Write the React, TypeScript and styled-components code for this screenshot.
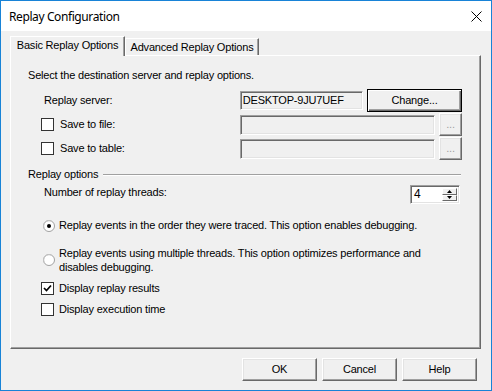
import styled, { createGlobalStyle } from 'styled-components'

const GlobalStyle = createGlobalStyle`
  html, body { margin: 0; padding: 0; background: #ffffff; }
  body { font-family: 'Liberation Sans', Arial, sans-serif; }
  * { box-sizing: border-box; }
`

const Window = styled.div`
  width: 492px;
  height: 391px;
  border: 1px solid #1883d7;
  background: #f0f0f0;
  display: flex;
  flex-direction: column;
  font-size: 11px;
  letter-spacing: -0.18px;
  color: #000;
`

const TitleBar = styled.div`
  height: 30px;
  flex: none;
  background: #ffffff;
  display: flex;
  align-items: center;
  justify-content: space-between;
  padding: 0 9px 0 8px;
  font-family: 'Noto Sans', 'Open Sans', sans-serif;
  font-size: 12px;
  letter-spacing: -0.4px;
`

const Body = styled.div`
  padding: 5px 0 0 9px;
  display: flex;
  flex-direction: column;
`

const TabStrip = styled.div`
  height: 19px;
  display: flex;
  align-items: flex-end;
`

const Tab = styled.div<{ $active?: boolean; $w: number }>`
  width: ${p => p.$w}px;
  height: ${p => (p.$active ? 20 : 17)}px;
  margin-bottom: ${p => (p.$active ? -1 : 0)}px;
  position: relative;
  z-index: ${p => (p.$active ? 1 : 0)};
  background: #f0f0f0;
  border-top: 1px solid #ffffff;
  border-left: 1px solid #ffffff;
  border-right: 1px solid #696969;
  box-shadow: inset -1px 0 #a0a0a0;
  text-align: center;
  line-height: 13px;
  padding-top: 2px;
  white-space: nowrap;
`

const Panel = styled.div`
  width: 471px;
  height: 294px;
  border-top: 1px solid #ffffff;
  border-left: 1px solid #ffffff;
  border-right: 1px solid #696969;
  border-bottom: 1px solid #696969;
  box-shadow: inset -1px -1px #a0a0a0;
  padding: 13px 18px 0 17px;
  display: flex;
  flex-direction: column;
`

const Text = styled.div`
  line-height: 13px;
  white-space: nowrap;
`

const Form = styled.div`
  margin: 7px 0 0 13px;
  display: flex;
  flex-direction: column;
  gap: 1px;
`

const FormRow = styled.div`
  height: 23px;
  display: flex;
  align-items: center;
`

const LeftCell = styled.div`
  width: 200px;
  display: flex;
  align-items: center;
  gap: 5px;
`

const Label = styled.span<{ $indent?: number }>`
  line-height: 13px;
  margin-left: ${p => p.$indent ?? 0}px;
  white-space: nowrap;
`

const Field = styled.div<{ $w: number; $h: number }>`
  width: ${p => p.$w}px;
  height: ${p => p.$h}px;
  border-top: 1px solid #a0a0a0;
  border-left: 1px solid #a0a0a0;
  border-right: 1px solid #ffffff;
  border-bottom: 1px solid #ffffff;
  box-shadow: inset 1px 1px #696969, inset -1px -1px #e3e3e3;
  background: #f0f0f0;
  padding: 2px 0 0 2px;
  line-height: 13px;
`

const Button = styled.div<{ $w: number; $default?: boolean; $disabled?: boolean }>`
  width: ${p => p.$w}px;
  height: 23px;
  flex: none;
  margin-left: 4px;
  display: flex;
  align-items: center;
  justify-content: center;
  background: #f0f0f0;
  color: ${p => (p.$disabled ? '#a0a0a0' : '#000')};
  border: 1px solid;
  border-color: ${p => (p.$default ? '#000' : '#ffffff #696969 #696969 #ffffff')};
  box-shadow: ${p =>
    p.$default
      ? 'inset 1px 1px #ffffff, inset -1px -1px #696969, inset -2px -2px #a0a0a0'
      : 'inset -1px -1px #a0a0a0, inset 1px 1px #e3e3e3'};
  line-height: 13px;
`

const GroupHeader = styled.div`
  margin: 8px 1px 0 0;
  display: flex;
  align-items: center;
  gap: 5px;
`

const Rule = styled.div`
  flex: 1;
  height: 2px;
  border-top: 1px solid #a0a0a0;
  border-bottom: 1px solid #ffffff;
`

const ThreadsRow = styled.div`
  margin: 3px 2px 0 16px;
  height: 20px;
  display: flex;
  justify-content: space-between;
  align-items: flex-start;
`

const ThreadsLabel = styled(Text)`
  margin-top: 2px;
`

const Spinner = styled.div`
  width: 50px;
  height: 19px;
  margin-top: 1px;
  display: flex;
  background: #ffffff;
  border-top: 1px solid #a0a0a0;
  border-left: 1px solid #a0a0a0;
  border-right: 1px solid #ffffff;
  border-bottom: 1px solid #ffffff;
  box-shadow: inset 1px 1px #696969, inset -1px -1px #e3e3e3;
  padding: 2px 2px 2px 3px;
`

const SpinValue = styled.div`
  flex: 1;
  line-height: 13px;
  font-size: 12px;
`

const SpinButtons = styled.div`
  width: 15px;
  display: flex;
  flex-direction: column;
`

const SpinButton = styled.div`
  flex: 1;
  display: flex;
  align-items: center;
  justify-content: center;
  background: #f0f0f0;
  border-top: 1px solid #ffffff;
  border-left: 1px solid #ffffff;
  border-right: 1px solid #696969;
  border-bottom: 1px solid #696969;
`

const OptionRow = styled.div<{ $top: number; $indent: number }>`
  margin: ${p => p.$top}px 0 0 ${p => p.$indent}px;
  display: flex;
  align-items: center;
  gap: 4px;
`

const OptionText = styled.div<{ $lh?: number }>`
  line-height: ${p => p.$lh ?? 13}px;
`

const Box = styled.div`
  width: 13px;
  height: 13px;
  flex: none;
  background: #ffffff;
  border: 1px solid #333333;
  display: flex;
  align-items: center;
  justify-content: center;
  margin-right: 1px;
`

const Footer = styled.div`
  display: flex;
  justify-content: flex-end;
  gap: 5px;
  padding: 9px 14px 0 0;
`

const FooterButton = styled(Button)`
  margin-left: 0;
`

const CloseIcon = () => (
  <svg width="11" height="11" viewBox="0 0 11 11">
    <path d="M0.5 0.5 L10.5 10.5 M10.5 0.5 L0.5 10.5" stroke="#000" strokeWidth="1" fill="none" />
  </svg>
)

const Radio = ({ checked }: { checked?: boolean }) => (
  <svg width="12" height="12" viewBox="0 0 12 12" style={{ flex: 'none' }}>
    <circle cx="6" cy="6" r="5.5" fill="#ffffff" stroke="#a0a0a0" />
    <path d="M2.2 9.8 A5 5 0 0 1 9.8 2.2" stroke="#c8c8c8" fill="none" />
    {checked && <circle cx="6" cy="6" r="2" fill="#000" />}
  </svg>
)

const Checkbox = ({ checked }: { checked?: boolean }) => (
  <Box>
    {checked && (
      <svg width="9" height="9" viewBox="0 0 9 9">
        <path d="M1 4 L3.5 6.5 L8 1.5" stroke="#000" strokeWidth="1.7" fill="none" />
      </svg>
    )}
  </Box>
)

const Arrow = ({ up }: { up?: boolean }) => (
  <svg width="5" height="3" viewBox="0 0 5 3">
    <path d={up ? 'M0 3 L2.5 0 L5 3 Z' : 'M0 0 L5 0 L2.5 3 Z'} fill="#000" />
  </svg>
)

export default function App() {
  return (
    <>
      <GlobalStyle />
      <Window>
        <TitleBar>
          <span>Replay Configuration</span>
          <CloseIcon />
        </TitleBar>
        <Body>
          <TabStrip>
            <Tab $active $w={115}>Basic Replay Options</Tab>
            <Tab $w={134}>Advanced Replay Options</Tab>
          </TabStrip>
          <Panel>
            <Text>Select the destination server and replay options.</Text>
            <Form>
              <FormRow>
                <LeftCell>
                  <Label $indent={3}>Replay server:</Label>
                </LeftCell>
                <Field $w={124} $h={19}>DESKTOP-9JU7UEF</Field>
                <Button $w={95} $default>Change...</Button>
              </FormRow>
              <FormRow>
                <LeftCell>
                  <Checkbox />
                  <Label>Save to file:</Label>
                </LeftCell>
                <Field $w={196} $h={20} />
                <Button $w={23} $disabled>...</Button>
              </FormRow>
              <FormRow>
                <LeftCell>
                  <Checkbox />
                  <Label>Save to table:</Label>
                </LeftCell>
                <Field $w={196} $h={20} />
                <Button $w={23} $disabled>...</Button>
              </FormRow>
            </Form>
            <GroupHeader>
              <Text>Replay options</Text>
              <Rule />
            </GroupHeader>
            <ThreadsRow>
              <ThreadsLabel>Number of replay threads:</ThreadsLabel>
              <Spinner>
                <SpinValue>4</SpinValue>
                <SpinButtons>
                  <SpinButton><Arrow up /></SpinButton>
                  <SpinButton><Arrow /></SpinButton>
                </SpinButtons>
              </Spinner>
            </ThreadsRow>
            <OptionRow $top={15} $indent={15}>
              <Radio checked />
              <OptionText>Replay events in the order they were traced. This option enables debugging.</OptionText>
            </OptionRow>
            <OptionRow $top={14} $indent={15}>
              <Radio />
              <OptionText $lh={14}>
                Replay events using multiple threads. This option optimizes performance and
                <br />
                disables debugging.
              </OptionText>
            </OptionRow>
            <OptionRow $top={8} $indent={13}>
              <Checkbox checked />
              <OptionText>Display replay results</OptionText>
            </OptionRow>
            <OptionRow $top={8} $indent={13}>
              <Checkbox />
              <OptionText>Display execution time</OptionText>
            </OptionRow>
          </Panel>
          <Footer>
            <FooterButton $w={75}>OK</FooterButton>
            <FooterButton $w={75}>Cancel</FooterButton>
            <FooterButton $w={75}>Help</FooterButton>
          </Footer>
        </Body>
      </Window>
    </>
  )
}
